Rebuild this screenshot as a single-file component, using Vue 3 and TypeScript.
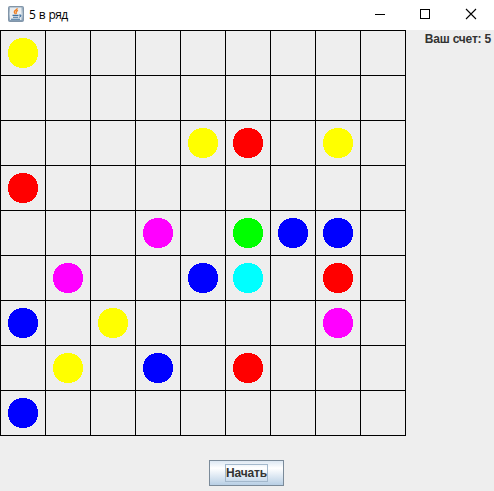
<script setup lang="ts">
type Ball = 'yellow' | 'red' | 'magenta' | 'lime' | 'blue' | 'cyan'

const codes: Record<string, Ball> = {
  y: 'yellow', r: 'red', m: 'magenta', g: 'lime', b: 'blue', c: 'cyan',
}

const rows: string[] = [
  'y........',
  '.........',
  '....yr.y.',
  'r........',
  '...m.gbb.',
  '.m..bc.r.',
  'b.y....m.',
  '.y.b.r...',
  'b........',
]

const cells: (Ball | null)[] = rows.flatMap(r => [...r].map(c => codes[c] ?? null))
const score = 5
</script>

<template>
  <div class="window">
    <header class="titlebar">
      <svg class="app-icon" width="16" height="16" viewBox="0 0 16 16">
        <defs>
          <linearGradient id="iconBg" x1="0" y1="0" x2="0" y2="1">
            <stop offset="0" stop-color="#8fa6ba" />
            <stop offset="0.5" stop-color="#b9c8d5" />
            <stop offset="1" stop-color="#7d97af" />
          </linearGradient>
        </defs>
        <rect x="0.5" y="0.5" width="15" height="15" rx="1" fill="url(#iconBg)" stroke="#8295a8" />
        <rect x="2" y="1.5" width="11.5" height="12.5" fill="#f4f6f7" opacity="0.85" />
        <path d="M9.3 2.2C9.3 4 6 4.4 6.3 6.2C6.4 7 7.2 7.3 7.3 8.2M10 4.4C8.4 5 7.6 5.8 8.6 7.8" fill="none" stroke="#ef8126" stroke-width="1.3" />
        <path d="M4.5 9.4H10.5M5 11.2H10M3 13.3H12M11 9.2C13.6 8.4 13.4 10.8 10.8 11.3" fill="none" stroke="#41719f" stroke-width="1.1" />
      </svg>
      <span class="title">5 в ряд</span>
      <div class="controls">
        <svg width="46" height="30" viewBox="0 0 46 30"><path d="M19 14.5H29" stroke="#000" /></svg>
        <svg width="46" height="30" viewBox="0 0 46 30"><rect x="18.5" y="9.5" width="9" height="9" fill="none" stroke="#000" /></svg>
        <svg width="46" height="30" viewBox="0 0 46 30"><path d="M18 9L28 19M28 9L18 19" stroke="#000" stroke-width="1.1" /></svg>
      </div>
    </header>
    <main class="content">
      <div class="board">
        <div v-for="(ball, i) in cells" :key="i" class="cell">
          <svg v-if="ball" width="30" height="30" viewBox="0 0 30 30" shape-rendering="crispEdges">
            <circle cx="15" cy="15" r="15.15" :class="ball" />
          </svg>
        </div>
      </div>
      <div class="score">Ваш счет: {{ score }}</div>
    </main>
    <footer class="footer">
      <button class="start"><span class="focus">Начать</span></button>
    </footer>
  </div>
</template>

<style>
body {
  margin: 0;
  overflow: hidden;
}
</style>

<style scoped>
.window {
  width: 494px;
  height: 491px;
  display: flex;
  flex-direction: column;
  background: #eee;
  overflow: hidden;
}
.titlebar {
  height: 30px;
  flex: none;
  display: flex;
  align-items: center;
  background: #fff;
  padding-left: 8px;
  box-sizing: border-box;
}
.app-icon {
  flex: none;
  margin-top: -2px;
}
.title {
  margin-left: 5px;
  font: 12px/16px "Open Sans", "Noto Sans", sans-serif;
  letter-spacing: -0.6px;
  word-spacing: 0.9px;
  color: #000;
}
.controls {
  margin-left: auto;
  display: flex;
}
.controls svg {
  display: block;
}
.content {
  display: flex;
  justify-content: space-between;
  flex: none;
}
.board {
  display: grid;
  grid-template-columns: repeat(9, 45px);
  grid-auto-rows: 45px;
  border-right: 1px solid #000;
  border-bottom: 1px solid #000;
}
.cell {
  border-left: 1px solid #000;
  border-top: 1px solid #000;
  display: flex;
  align-items: center;
  justify-content: center;
}
.yellow { fill: #ff0; }
.red { fill: #f00; }
.magenta { fill: #f0f; }
.lime { fill: #0f0; }
.blue { fill: #00f; }
.cyan { fill: #0ff; }
.score {
  padding: 1px 3px 0 0;
  font: bold 12px/16px "Liberation Sans", Arial, sans-serif;
  letter-spacing: -0.2px;
  color: #333;
  white-space: nowrap;
}
.footer {
  display: flex;
  justify-content: center;
  padding: 24px 1px 0 0;
}
.start {
  width: 75px;
  height: 26px;
  padding: 0;
  border: 1px solid #7a8a99;
  background: linear-gradient(#dde8f3 0%, #fff 30%, #b8cfe5 100%);
  display: flex;
  align-items: center;
  justify-content: center;
  font: bold 12px/16px "Liberation Sans", Arial, sans-serif;
  letter-spacing: -0.15px;
  color: #333;
}
.focus {
  width: 41px;
  height: 16px;
  display: flex;
  justify-content: center;
  border: 1px solid #a3b8cc;
}
</style>
